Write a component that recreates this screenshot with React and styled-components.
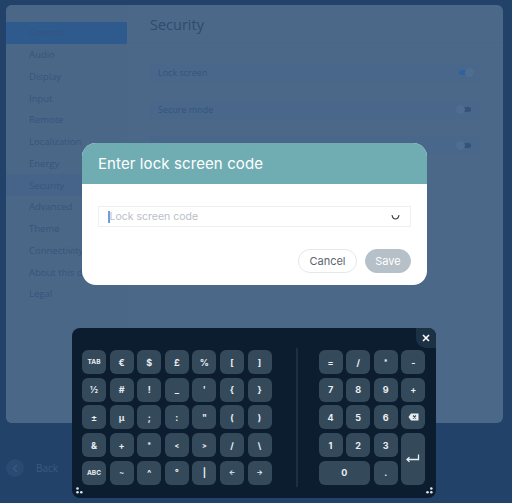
import React from "react";
import styled, { createGlobalStyle } from "styled-components";

const Global = createGlobalStyle`
  html, body { margin: 0; padding: 0; }
  body {
    width: 512px;
    height: 503px;
    overflow: hidden;
    background: #23426a;
    font-family: "Open Sans", "Noto Sans", sans-serif;
  }
`;

const Screen = styled.div`
  position: relative;
  width: 512px;
  height: 503px;
  padding: 5px 9px 0 6px;
  box-sizing: border-box;
`;

const Panel = styled.div`
  height: 418px;
  border-radius: 6px;
  background: #4b6889;
  display: grid;
  grid-template-columns: 121px 1fr;
  overflow: hidden;
`;

const Sidebar = styled.nav`
  display: flex;
  flex-direction: column;
  padding-top: 17px;
  background: #4a6788;
`;

const NavItem = styled.div`
  height: 21.75px;
  display: flex;
  align-items: center;
  padding-left: 23px;
  font-size: 9.5px;
  color: #36557c;
  white-space: nowrap;
  overflow: hidden;
  background: ${(p) => (p.$active ? "#2e5a8d" : p.$selected ? "#46648a" : "transparent")};
`;

const Content = styled.section`
  display: flex;
  flex-direction: column;
`;

const Header = styled.div`
  height: 38px;
  box-sizing: border-box;
  padding-top: 2px;
  display: flex;
  align-items: center;
  padding-left: 23px;
  font-size: 14.5px;
  color: #2d4b70;
  border-bottom: 1px solid #48668a;
`;

const Rows = styled.div`
  display: flex;
  flex-direction: column;
  gap: 17.5px;
  padding: 20px 22px 0 23px;
`;

const Row = styled.div`
  height: 19px;
  border-radius: 3px;
  background: #49678b;
  display: flex;
  align-items: center;
  justify-content: space-between;
  padding: 0 10px 0 8px;
  font-size: 9px;
  color: #36557c;
`;

const Toggle = styled.div`
  position: relative;
  width: 12px;
  height: 5px;
  border-radius: 3px;
  background: ${(p) => (p.$on ? "#2f62a0" : "#34527a")};
  &::after {
    content: "";
    position: absolute;
    top: -2px;
    ${(p) => (p.$on ? "right: -3px;" : "left: -3px;")}
    width: 9px;
    height: 9px;
    border-radius: 50%;
    background: #4e6d90;
  }
`;

const Back = styled.div`
  position: absolute;
  left: 6px;
  top: 459px;
  display: flex;
  align-items: center;
  gap: 12px;
  font-size: 10px;
  color: #3b5a80;
`;

const BackCircle = styled.div`
  width: 18px;
  height: 18px;
  border-radius: 50%;
  background: #284a73;
  display: flex;
  align-items: center;
  justify-content: center;
`;

const Dialog = styled.div`
  position: absolute;
  left: 82px;
  top: 143px;
  width: 345px;
  height: 142px;
  border-radius: 14px;
  background: #ffffff;
  overflow: hidden;
  font-family: "Inter", "Noto Sans", sans-serif;
  display: flex;
  flex-direction: column;
`;

const DialogHead = styled.div`
  height: 41px;
  background: #6fadb3;
  display: flex;
  align-items: center;
  padding-left: 16px;
  font-size: 15px;
  color: #ffffff;
  letter-spacing: 0.1px;
`;

const DialogBody = styled.div`
  padding: 22px 16px 12px 16px;
  display: flex;
  flex-direction: column;
  gap: 22px;
`;

const Input = styled.div`
  height: 21px;
  border: 1px solid #edf0f2;
  box-sizing: border-box;
  display: flex;
  align-items: center;
  padding: 0 10px 0 9px;
  font-size: 10.5px;
  color: #b9bec6;
`;

const Caret = styled.span`
  width: 1.5px;
  height: 12px;
  background: #6f9ee0;
`;

const Placeholder = styled.span`
  flex: 1;
`;

const Buttons = styled.div`
  display: flex;
  justify-content: flex-end;
  gap: 8px;
`;

const Btn = styled.button`
  height: 24px;
  width: ${(p) => p.$w}px;
  border-radius: 12px;
  font-family: "Inter", "Noto Sans", sans-serif;
  font-size: 11px;
  padding: 0;
  border: 1px solid ${(p) => (p.$primary ? "#b6c0c8" : "#e3e7eb")};
  background: ${(p) => (p.$primary ? "#b6c0c8" : "#ffffff")};
  color: ${(p) => (p.$primary ? "#ffffff" : "#5a6470")};
`;

const Keyboard = styled.div`
  position: absolute;
  left: 72px;
  top: 328px;
  width: 364px;
  height: 170px;
  box-sizing: border-box;
  border-radius: 8px;
  background: #0b1d2f;
  padding: 22px 10px 0 10px;
  display: flex;
  align-items: flex-start;
  font-family: "Inter", "DejaVu Sans", sans-serif;
`;

const KeyGrid = styled.div`
  display: grid;
  grid-template-columns: repeat(${(p) => p.$cols}, 24px);
  grid-auto-rows: 24px;
  column-gap: 3.6px;
  row-gap: 3.7px;
`;

const Key = styled.div`
  border-radius: 6px;
  background: #344a5b;
  color: #e9eef2;
  font-size: ${(p) => p.$size || 9}px;
  font-weight: 700;
  display: flex;
  align-items: center;
  justify-content: center;
  grid-column: span ${(p) => p.$cs || 1};
  grid-row: span ${(p) => p.$rs || 1};
`;

const Divider = styled.div`
  width: 2px;
  height: 139px;
  margin: -2px 21px 0 24px;
  background: #1c3044;
`;

const Close = styled.div`
  position: absolute;
  top: 0;
  right: 0;
  width: 20px;
  height: 20px;
  border-radius: 0 8px 0 10px;
  background: #1d3145;
  display: flex;
  align-items: center;
  justify-content: center;
`;

const Grip = styled.svg`
  position: absolute;
  bottom: 4px;
  ${(p) => (p.$right ? "right: 3px;" : "left: 4px;")}
`;

const navItems = [
  "General", "Audio", "Display", "Input", "Remote", "Localization", "Energy",
  "Security", "Advanced", "Theme", "Connectivity", "About this device", "Legal",
];

const sizes = { TAB: 6.5, ABC: 6.5, "<": 7, ">": 7, "←": 7, "→": 7, "~": 7, "*": 7 };

const leftKeys = [
  "TAB", "€", "$", "£", "%", "[", "]",
  "½", "#", "!", "_", "'", "{", "}",
  "±", "µ", ";", ":", "\"", "(", ")",
  "&", "+", "*", "<", ">", "/", "\\",
  "ABC", "~", "^", "°", "|", "←", "→",
];

const BackspaceIcon = () => (
  <svg width="11" height="8" viewBox="0 0 11 8">
    <path d="M3 0.5H10.5V7.5H3L0.5 4Z" fill="#e9eef2" />
    <path d="M5 2.5L8 5.5M8 2.5L5 5.5" stroke="#344a5b" strokeWidth="1.1" />
  </svg>
);

const EnterIcon = () => (
  <svg width="14" height="9" viewBox="0 0 14 9">
    <path d="M12.5 0.5V5.5H1.5" stroke="#e9eef2" strokeWidth="1.3" fill="none" />
    <path d="M3.5 3.2L1 5.5L3.5 7.8" stroke="#e9eef2" strokeWidth="1.3" fill="none" />
  </svg>
);

export default function App() {
  return (
    <>
      <Global />
      <Screen>
        <Panel>
          <Sidebar>
            {navItems.map((n) => (
              <NavItem key={n} $active={n === "General"} $selected={n === "Security"}>
                {n}
              </NavItem>
            ))}
          </Sidebar>
          <Content>
            <Header>Security</Header>
            <Rows>
              <Row>Lock screen<Toggle $on /></Row>
              <Row>Secure mode<Toggle /></Row>
              <Row><span /><Toggle /></Row>
            </Rows>
          </Content>
        </Panel>

        <Back>
          <BackCircle>
            <svg width="6" height="9" viewBox="0 0 6 9">
              <path d="M5 1L1.5 4.5L5 8" stroke="#3b5a80" strokeWidth="1.3" fill="none" />
            </svg>
          </BackCircle>
          Back
        </Back>

        <Dialog>
          <DialogHead>Enter lock screen code</DialogHead>
          <DialogBody>
            <Input>
              <Caret />
              <Placeholder>Lock screen code</Placeholder>
              <svg width="9" height="6" viewBox="0 0 9 6">
                <path d="M1 1.2C1.5 4 3 5 4.5 5S7.5 4 8 1.2" stroke="#333" strokeWidth="1.1" fill="none" />
              </svg>
            </Input>
            <Buttons>
              <Btn $w={59}>Cancel</Btn>
              <Btn $w={46} $primary>Save</Btn>
            </Buttons>
          </DialogBody>
        </Dialog>

        <Keyboard>
          <KeyGrid $cols={7}>
            {leftKeys.map((k, i) => (
              <Key key={i} $size={sizes[k]}>{k}</Key>
            ))}
          </KeyGrid>
          <Divider />
          <KeyGrid $cols={4}>
            <Key>=</Key><Key>/</Key><Key $size={7}>*</Key><Key>-</Key>
            <Key>7</Key><Key>8</Key><Key>9</Key><Key>+</Key>
            <Key>4</Key><Key>5</Key><Key>6</Key><Key><BackspaceIcon /></Key>
            <Key>1</Key><Key>2</Key><Key>3</Key><Key $rs={2}><EnterIcon /></Key>
            <Key $cs={2}>0</Key><Key>.</Key>
          </KeyGrid>
          <Close>
            <svg width="8" height="8" viewBox="0 0 8 8">
              <path d="M1 1L7 7M7 1L1 7" stroke="#fff" strokeWidth="1.6" />
            </svg>
          </Close>
          <Grip width="7" height="7" viewBox="0 0 7 7">
            <circle cx="1.5" cy="1.5" r="1.3" fill="#dfe6ec" />
            <circle cx="1.5" cy="5.3" r="1.3" fill="#dfe6ec" />
            <circle cx="5.3" cy="5.3" r="1.3" fill="#dfe6ec" />
          </Grip>
          <Grip $right width="7" height="7" viewBox="0 0 7 7">
            <circle cx="5.3" cy="1.5" r="1.3" fill="#dfe6ec" />
            <circle cx="1.5" cy="5.3" r="1.3" fill="#dfe6ec" />
            <circle cx="5.3" cy="5.3" r="1.3" fill="#dfe6ec" />
          </Grip>
        </Keyboard>
      </Screen>
    </>
  );
}
